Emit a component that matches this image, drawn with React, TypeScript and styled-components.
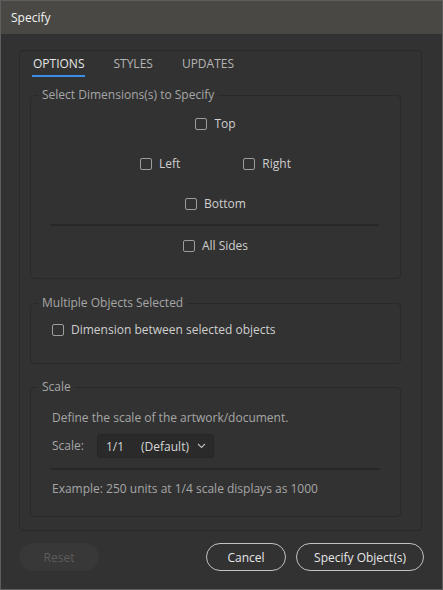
import React, { ReactElement, useState } from 'react';
import styled, { createGlobalStyle } from 'styled-components';

const GlobalStyle = createGlobalStyle`
  html, body {
    margin: 0;
    padding: 0;
    background: #323232;
  }
  * {
    box-sizing: border-box;
  }
`;

const Window = styled.div`
  width: 443px;
  height: 590px;
  border: 1px solid #5e5e5e;
  background: #323232;
  font-family: 'Open Sans', 'Noto Sans', sans-serif;
  font-size: 12px;
  color: #c8c8c8;
  display: flex;
  flex-direction: column;
`;

const TitleBar = styled.div`
  height: 33px;
  background: #4a4844;
  color: #f2f2f2;
  font-size: 12px;
  display: flex;
  align-items: center;
  padding-left: 10px;
`;

const Body = styled.div`
  flex: 1;
  padding: 16px 20px 0 18px;
  display: flex;
  flex-direction: column;
`;

const Panel = styled.div`
  height: 481px;
  border: 1px solid #292929;
  border-radius: 4px;
  padding: 0 20px 0 10px;
  display: flex;
  flex-direction: column;
`;

const Tabs = styled.div`
  display: flex;
  gap: 27px;
  padding: 5px 0 0 2px;
  height: 36px;
`;

const Tab = styled.div<{ $active?: boolean }>`
  font-size: 12px;
  line-height: 16px;
  padding: 0 1px 3px;
  height: 21px;
  color: ${(p) => (p.$active ? '#e6e6e6' : '#b4b4b4')};
  border-bottom: 2px solid ${(p) => (p.$active ? '#3d8ee6' : 'transparent')};
`;

const Group = styled.fieldset<{ $height: number }>`
  margin: 0;
  height: ${(p) => p.$height}px;
  flex-shrink: 0;
  border: 1px solid #292929;
  border-radius: 4px;
  padding: 0;
  display: flex;
  flex-direction: column;
`;

const Legend = styled.legend`
  margin-left: 7px;
  padding: 0 4px;
  font-size: 12px;
  line-height: 16px;
  color: #a6a6a6;
`;

const Gap = styled.div<{ $h: number }>`
  height: ${(p) => p.$h}px;
  flex-shrink: 0;
`;

const Row = styled.div<{ $gap?: number }>`
  display: flex;
  justify-content: center;
  gap: ${(p) => p.$gap ?? 0}px;
  height: 40px;
  align-items: center;
`;

const Divider = styled.div<{ $left: number; $right: number }>`
  height: 2px;
  background: #282828;
  margin: 0 ${(p) => p.$right}px 0 ${(p) => p.$left}px;
`;

const CheckLabel = styled.label`
  display: inline-flex;
  align-items: center;
  gap: 7px;
  color: #cfcfcf;
  font-size: 12px;
  line-height: 16px;
  cursor: default;
`;

const Box = styled.span<{ $checked: boolean }>`
  width: 12px;
  height: 12px;
  border: 1px solid #9c9c9c;
  border-radius: 2px;
  background: ${(p) => (p.$checked ? '#3d8ee6' : 'transparent')};
  display: inline-flex;
  align-items: center;
  justify-content: center;
`;

const Inner = styled.div`
  padding: 0 20px 0 21px;
  display: flex;
  flex-direction: column;
`;

const Text = styled.div`
  color: #a6a6a6;
  line-height: 16px;
`;

const ScaleRow = styled.div`
  display: flex;
  align-items: center;
  gap: 13px;
  height: 24px;
`;

const Select = styled.div`
  width: 117px;
  height: 24px;
  border: 1px solid #262626;
  border-radius: 3px;
  background: #2a2a2a;
  color: #d6d6d6;
  display: flex;
  align-items: center;
  padding: 0 7px 0 8px;
`;

const SelectValue = styled.span`
  margin-right: 17px;
  white-space: nowrap;
`;

const SelectHint = styled.span`
  white-space: nowrap;
`;

const Chevron = styled.svg`
  margin-left: auto;
  flex-shrink: 0;
`;

const Footer = styled.div`
  display: flex;
  align-items: center;
  padding-top: 12px;
  margin-right: -2px;
`;

const Button = styled.button<{ $width: number; $disabled?: boolean }>`
  width: ${(p) => p.$width}px;
  height: 28px;
  border-radius: 14px;
  font-family: 'Open Sans', 'Noto Sans', sans-serif;
  font-size: 12px;
  padding: 0;
  background: ${(p) => (p.$disabled ? '#383838' : 'transparent')};
  border: ${(p) => (p.$disabled ? '1px solid #383838' : '1px solid #c2c2c2')};
  color: ${(p) => (p.$disabled ? '#5c5c5c' : '#e6e6e6')};
  & + & {
    margin-left: 10px;
  }
`;

const Spacer = styled.div`
  flex: 1;
`;

const Check = ({ label }: { label: string }): ReactElement => {
  const [checked, setChecked] = useState(false);
  return (
    <CheckLabel onClick={() => setChecked(!checked)}>
      <Box $checked={checked} />
      {label}
    </CheckLabel>
  );
};

const App = (): ReactElement => {
  return (
    <>
      <GlobalStyle />
      <Window>
        <TitleBar>Specify</TitleBar>
        <Body>
          <Panel>
            <Tabs>
              <Tab $active>OPTIONS</Tab>
              <Tab>STYLES</Tab>
              <Tab>UPDATES</Tab>
            </Tabs>

            <Group $height={192}>
              <Legend>Select Dimensions(s) to Specify</Legend>
              <Gap $h={1} />
              <Row>
                <Check label="Top" />
              </Row>
              <Row $gap={63}>
                <Check label="Left" />
                <Check label="Right" />
              </Row>
              <Row>
                <Check label="Bottom" />
              </Row>
              <Divider $left={20} $right={21} />
              <Row>
                <Check label="All Sides" />
              </Row>
            </Group>

            <Gap $h={16} />
            <Group $height={69}>
              <Legend>Multiple Objects Selected</Legend>
              <Inner>
                <Gap $h={11} />
                <Check label="Dimension between selected objects" />
              </Inner>
            </Group>

            <Gap $h={15} />
            <Group $height={138}>
              <Legend>Scale</Legend>
              <Inner>
                <Gap $h={15} />
                <Text>Define the scale of the artwork/document.</Text>
                <Gap $h={8} />
                <ScaleRow>
                  <Text>Scale:</Text>
                  <Select>
                    <SelectValue>1/1</SelectValue>
                    <SelectHint>(Default)</SelectHint>
                    <Chevron width="9" height="6" viewBox="0 0 9 6">
                      <path d="M1 1 L4.5 4.5 L8 1" fill="none" stroke="#bdbdbd" strokeWidth="1.1" />
                    </Chevron>
                  </Select>
                </ScaleRow>
                <Gap $h={10} />
                <Divider $left={-1} $right={0} />
                <Gap $h={11} />
                <Text>Example: 250 units at 1/4 scale displays as 1000</Text>
              </Inner>
            </Group>
          </Panel>

          <Footer>
            <Button $width={80} $disabled>
              Reset
            </Button>
            <Spacer />
            <Button $width={80}>Cancel</Button>
            <Button $width={128}>Specify Object(s)</Button>
          </Footer>
        </Body>
      </Window>
    </>
  );
};

export default App;
